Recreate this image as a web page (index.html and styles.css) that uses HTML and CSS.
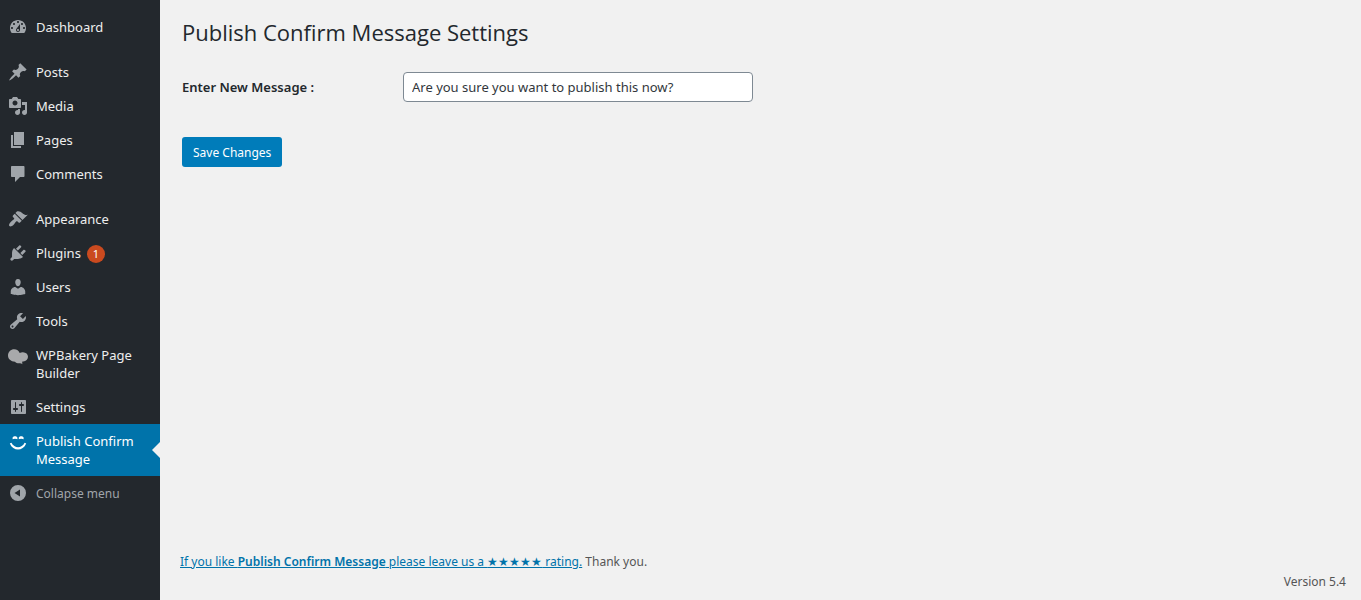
FILE: index.html
```html
<!DOCTYPE html>
<html lang="en">
<head>
<meta charset="utf-8">
<title>Publish Confirm Message Settings</title>
<link rel="stylesheet" href="styles.css">
</head>
<body>
<div class="layout">
  <nav class="sidebar" aria-label="Main menu">
    <ul class="menu">
      <li><a class="item" href="#"><svg class="icon" viewBox="0 0 20 20"><path fill-rule="evenodd" d="M3.76 16h12.48c1.1-1.37 1.76-3.11 1.76-5 0-4.42-3.58-8-8-8s-8 3.58-8 8c0 1.89.66 3.63 1.76 5zM10 4c.55 0 1 .45 1 1s-.45 1-1 1-1-.45-1-1 .45-1 1-1zM6 6c.55 0 1 .45 1 1s-.45 1-1 1-1-.45-1-1 .45-1 1-1zm8 0c.55 0 1 .45 1 1s-.45 1-1 1-1-.45-1-1 .45-1 1-1zm-5.37 5.55L12 7v6c0 1.1-.9 2-2 2s-2-.9-2-2c0-.57.24-1.08.63-1.45zM4 10c.55 0 1 .45 1 1s-.45 1-1 1-1-.45-1-1 .45-1 1-1zm12 0c.55 0 1 .45 1 1s-.45 1-1 1-1-.45-1-1 .45-1 1-1zm-5 3c0-.55-.45-1-1-1s-1 .45-1 1 .45 1 1 1 1-.45 1-1z"/></svg><span class="label">Dashboard</span></a></li>
      <li class="group"><a class="item" href="#"><svg class="icon" viewBox="0 0 20 20"><path d="M10.44 3.02l1.82-1.82 6.36 6.35-1.83 1.82c-1.05-.68-2.48-.57-3.41.36l-.75.75c-.92.93-1.04 2.35-.35 3.41l-1.83 1.82-2.41-2.41-2.8 2.79c-.42.42-3.38 2.71-3.8 2.29s1.86-3.39 2.28-3.81l2.79-2.79L4.1 9.36l1.83-1.82c1.05.69 2.48.57 3.4-.36l.75-.75c.93-.92 1.05-2.35.36-3.41z"/></svg><span class="label">Posts</span></a></li>
      <li><a class="item" href="#"><svg class="icon" viewBox="0 0 20 20"><path fill-rule="evenodd" d="M13 11V4c0-.55-.45-1-1-1h-1.67L9 1H5L3.67 3H2c-.55 0-1 .45-1 1v7c0 .55.45 1 1 1h10c.55 0 1-.45 1-1zM7 4.5c1.38 0 2.5 1.12 2.5 2.5S8.38 9.5 7 9.5 4.5 8.38 4.5 7 5.62 4.5 7 4.5zM14 6h5v10.5c0 1.38-1.12 2.5-2.5 2.5S14 17.88 14 16.5s1.12-2.5 2.5-2.5c.17 0 .34.02.5.05V9h-3V6zm-4 8.05V13h2v3.5c0 1.38-1.12 2.5-2.5 2.5S7 17.88 7 16.5 8.12 14 9.5 14c.17 0 .34.02.5.05z"/></svg><span class="label">Media</span></a></li>
      <li><a class="item" href="#"><svg class="icon" viewBox="0 0 20 20"><path d="M6 15V2h10v13H6zm-1 1h8v2H3V5h2v11z"/></svg><span class="label">Pages</span></a></li>
      <li><a class="item" href="#"><svg class="icon" viewBox="0 0 20 20"><path d="M4 2h11.500c.55 0 1 .45 1 1v9c0 .55-.45 1-1 1H12l-5 5v-5H4c-.55 0-1-.45-1-1V3c0-.55.45-1 1-1z"/></svg><span class="label">Comments</span></a></li>
      <li class="group"><a class="item" href="#"><svg class="icon" viewBox="0 0 20 20"><path d="M14.48 11.06L7.41 3.99l1.5-1.5c.5-.56 2.3-.47 3.51.32 1.21.8 1.43 1.28 2.91 2.1 1.18.64 2.45 1.26 4.45.85zm-.71.71L6.7 4.7 4.93 6.47c-.39.39-.39 1.02 0 1.41l1.06 1.06c.39.39.39 1.03 0 1.42-.6.6-1.43 1.11-2.21 1.69-.35.26-.7.53-1.01.84C1.43 14.23.4 16.08 1.4 17.07c.99 1 2.84-.03 4.18-1.36.31-.31.58-.66.85-1.02.57-.78 1.08-1.61 1.69-2.21.39-.39 1.02-.39 1.41 0l1.06 1.06c.39.39 1.02.39 1.41 0z"/></svg><span class="label">Appearance</span></a></li>
      <li><a class="item" href="#"><svg class="icon" viewBox="0 0 20 20"><path d="M13.11 4.36L9.87 7.6 8 5.73l3.24-3.24c.35-.34 1.05-.2 1.56.32.52.51.66 1.21.31 1.55zm-8 1.77l.91-1.12 9.01 9.01-1.19.84c-.71.71-2.63 1.16-3.82 1.16H6.14L4.9 17.26c-.59.59-1.54.59-2.12 0-.59-.58-.59-1.53 0-2.12l1.24-1.24v-3.88c0-1.13.4-3.19 1.09-3.89zm7.26 3.97l3.24-3.24c.34-.35 1.04-.21 1.55.31.52.51.66 1.21.31 1.55l-3.24 3.25z"/></svg><span class="label">Plugins</span><span class="badge">1</span></a></li>
      <li><a class="item" href="#"><svg class="icon" viewBox="0 0 20 20"><path d="M10 9.25c-2.27 0-2.73-3.44-2.73-3.44C7 4.02 7.82 2 9.97 2c2.16 0 2.98 2.02 2.71 3.81 0 0-.41 3.44-2.68 3.44zm0 2.57L12.72 10c2.39 0 4.52 2.33 4.52 4.53v2.49s-3.65 1.13-7.24 1.13c-3.65 0-7.24-1.13-7.24-1.13v-2.49c0-2.25 1.94-4.48 4.47-4.48z"/></svg><span class="label">Users</span></a></li>
      <li><a class="item" href="#"><svg class="icon" viewBox="0 0 20 20"><path fill-rule="evenodd" d="M16.68 9.77c-1.34 1.34-3.3 1.67-4.95.99l-5.41 6.52c-.99.99-2.59.99-3.58 0s-.99-2.59 0-3.57l6.52-5.42c-.68-1.65-.35-3.61.99-4.95 1.28-1.28 3.12-1.62 4.72-1.06l-2.89 2.89 2.82 2.82 2.86-2.87c.53 1.58.18 3.39-1.08 4.65zM3.81 16.21c.4.39 1.04.39 1.43 0 .4-.4.4-1.04 0-1.43-.39-.4-1.03-.4-1.43 0-.39.39-.39 1.03 0 1.43z"/></svg><span class="label">Tools</span></a></li>
      <li><a class="item" href="#"><svg class="icon bakery" viewBox="0 0 20 20"><path d="M6.200 4.200C8.800 4.200 10.900 5.700 11.700 7.900c1-.5 2.200-.8 3.300-.7 2.900.1 5 2 5 4.500 0 2.700-2 4.600-4.800 4.700h-.8c-.3.8-.3 1.600.1 2.800-1-.8-2-1-3-.9-1.500.2-3.400-.2-4.500-1.600C2.900 16.600 0 14 0 10.500 0 6.900 2.800 4.200 6.200 4.200z"/></svg><span class="label">WPBakery Page Builder</span></a></li>
      <li><a class="item" href="#"><svg class="icon" viewBox="0 0 20 20"><path fill-rule="evenodd" d="M18 16V4c0-.55-.45-1-1-1H4c-.55 0-1 .45-1 1v12c0 .55.45 1 1 1h13c.55 0 1-.45 1-1zM8 11h1c.55 0 1 .45 1 1s-.45 1-1 1H8v1.500c0 .28-.22.5-.5.5s-.5-.22-.5-.5V13H6c-.55 0-1-.45-1-1s.45-1 1-1h1V5.500c0-.28.22-.5.5-.5s.5.22.5.5V11zm5-2h-1c-.55 0-1-.45-1-1s.45-1 1-1h1V5.500c0-.28.22-.5.5-.5s.5.22.5.5V7h1c.55 0 1 .45 1 1s-.45 1-1 1h-1v5.500c0 .28-.22.5-.5.5s-.5-.22-.5-.5V9z"/></svg><span class="label">Settings</span></a></li>
      <li><a class="item current" href="#" aria-current="page"><svg class="icon" viewBox="0 0 20 20"><path d="M4.600 8.200V6.600c1-1.700 3.800-1.700 4.800 0v1.600c-1-.7-3.800-.7-4.800 0zM10.800 8.200V6.600c1-1.700 3.800-1.700 4.800 0v1.600c-1-.7-3.800-.7-4.800 0zM1.800 12.400l1.600-.7c3 5.900 10.400 5.900 13.200 0l1.600.7c-3.300 8-13.100 8-16.400 0z"/></svg><span class="label">Publish Confirm Message</span></a></li>
      <li><button class="item collapse" type="button"><svg class="icon" viewBox="0 0 20 20"><path fill-rule="evenodd" d="M10 2a8 8 0 1 1 0 16 8 8 0 0 1 0-16zm2 4.500L6.500 10l5.500 3.500z"/></svg><span class="label">Collapse menu</span></button></li>
    </ul>
  </nav>
  <div class="content">
    <main class="page">
      <h1 class="title">Publish Confirm Message Settings</h1>
      <form class="form">
        <div class="row">
          <label class="field-label" for="message">Enter New Message :</label>
          <input class="field" id="message" type="text" value="Are you sure you want to publish this now?">
        </div>
        <button class="save" type="button">Save Changes</button>
      </form>
    </main>
    <footer class="footer">
      <p class="thanks"><a class="rate" href="#">If you like <strong>Publish Confirm Message</strong> please leave us a <span class="stars">★★★★★</span> rating.</a> Thank you.</p>
      <p class="version">Version 5.4</p>
    </footer>
  </div>
</div>
</body>
</html>
```
FILE: styles.css
```css
* {
  box-sizing: border-box;
}

body {
  margin: 0;
  background: #f1f1f1;
  color: #444;
  font: 13px/18px "Noto Sans", "Open Sans", sans-serif;
}

.layout {
  display: flex;
  min-height: 100vh;
}

.sidebar {
  flex: 0 0 160px;
  padding-top: 10px;
  background: #23282d;
}

.menu {
  margin: 0;
  padding: 0;
  list-style: none;
}

.group {
  margin-top: 11px;
}

.item {
  position: relative;
  display: flex;
  align-items: flex-start;
  width: 100%;
  padding: 8px;
  border: 0;
  background: none;
  color: #eee;
  font: inherit;
  text-align: left;
  text-decoration: none;
}

.icon {
  flex: none;
  width: 20px;
  height: 20px;
  margin: -1px 8px -1px 0;
  fill: #a0a5aa;
}

.bakery {
  fill: #a8a9ab;
}

.badge {
  min-width: 18px;
  height: 18px;
  margin-left: 6px;
  margin-top: 1px;
  margin-bottom: -1px;
  border-radius: 9px;
  background: #ca4a1f;
  color: #fff;
  font-size: 11px;
  text-align: center;
}

.current {
  background: #0073aa;
  color: #fff;
}

.current .icon {
  fill: #fff;
}

.current::after {
  content: "";
  position: absolute;
  top: 50%;
  right: 0;
  margin-top: -8px;
  border: 8px solid transparent;
  border-left-width: 0;
  border-right-color: #f1f1f1;
}

.collapse {
  color: #a0a5aa;
}

.collapse .label {
  font-size: 12px;
  line-height: 19px;
}

.content {
  flex: 1;
  display: flex;
  flex-direction: column;
  padding: 18px 15px 8px 20px;
}

.page {
  flex: 1;
  padding-left: 2px;
}

.title {
  margin: 0;
  color: #23282d;
  font-family: "Open Sans", "Noto Sans", sans-serif;
  font-size: 22px;
  font-weight: 400;
  line-height: 28px;
}

.form {
  margin-top: 26px;
}

.row {
  display: flex;
  align-items: center;
}

.field-label {
  flex: 0 0 221px;
  color: #23282d;
  font-weight: 600;
  line-height: 20px;
}

.field {
  flex: 0 1 350px;
  min-width: 0;
  height: 30px;
  padding: 0 8px;
  border: 1px solid #7e8993;
  border-radius: 4px;
  background: #fff;
  color: #32373c;
  font: inherit;
}

.save {
  height: 30px;
  margin-top: 35px;
  padding: 1px 11px 0;
  border: 0;
  border-radius: 3px;
  background: #007cba;
  color: #fff;
  font: inherit;
  font-size: 12px;
}

.footer {
  color: #555;
  font-size: 12px;
  line-height: 20px;
}

.thanks,
.version {
  margin: 0;
}

.version {
  text-align: right;
}

.rate {
  color: #0073aa;
}

.rate strong {
  font-weight: 600;
}
```
